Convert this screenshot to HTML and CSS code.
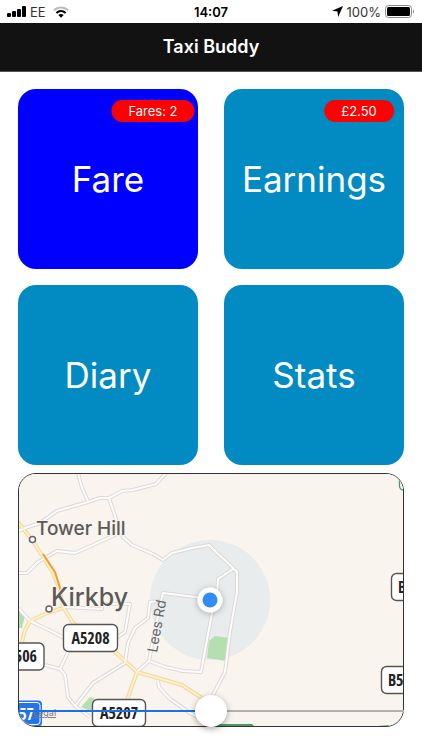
FILE: index.html
```
<!DOCTYPE html>
<html lang="en">

    <head>
        <meta charset="UTF-8">
        <meta name="viewport" content="width=device-width, initial-scale=1.0">
        <title>Taxi Buddy</title>
        <link rel="stylesheet" href="styles.css">
    </head>

    <body>

        <div class="status">
            <div class="status-left">
                <svg width="19" height="12" viewBox="0 0 19 12">
                    <rect x="0" y="7" width="4" height="4" rx="1"/>
                    <rect x="5" y="5" width="4" height="6" rx="1"/>
                    <rect x="10" y="3" width="4" height="8" rx="1"/>
                    <rect x="15" y="0" width="4" height="11" rx="1"/>
                </svg>
                <span>EE</span>
                <svg class="wifi" width="16" height="12" viewBox="0 0 16 12" fill="none" stroke="#000" stroke-width="2">
                    <path d="M1 4.4C5 .4 11 .4 15 4.4" stroke="#bbb"/>
                    <path d="M3.4 7C6 4.4 10 4.4 12.6 7"/>
                    <path d="M5.3 9C6.9 7.5 9.1 7.5 10.7 9L8 11.8z" fill="#000" stroke="none"/>
                </svg>
            </div>
            <div class="time">14:07</div>
            <div class="status-right">
                <svg width="11" height="11" viewBox="0 0 11 11">
                    <path d="M11 0L6.2 11L5.4 5.6L0 4.8z"/>
                </svg>
                <span>100%</span>
                <svg width="30" height="13" viewBox="0 0 30 13">
                    <rect x=".5" y=".5" width="26" height="12" rx="3" fill="none" stroke="#888"/>
                    <rect x="2" y="2" width="23" height="9" rx="1.5"/>
                    <path d="M28 4.5C29.4 5 29.4 8 28 8.5z" fill="#888"/>
                </svg>
            </div>
        </div>

        <header class="header">
            <h1>Taxi Buddy</h1>
        </header>

        <main class="main">
            <div class="tiles">
                <button type="button" class="tile active">Fare<span class="badge">Fares: 2</span></button>
                <button type="button" class="tile">Earnings<span class="badge">£2.50</span></button>
                <button type="button" class="tile">Diary</button>
                <button type="button" class="tile">Stats</button>
            </div>

            <div class="map-box">
                <div class="map">
                    <svg viewBox="19 474 384 252" preserveAspectRatio="xMidYMid slice">
                        <defs>
                            <filter id="shadow" x="-50%" y="-50%" width="200%" height="200%">
                                <feDropShadow dx="0" dy="1" stdDeviation="3" flood-opacity=".3"/>
                            </filter>
                            <g id="roads">
                                <path d="M78 473L82 488L88 501"/>
                                <path d="M18 531L25 528L40 523L57 511L88 502L100 498L109 498L122 491L133 490L156 484L167 472"/>
                                <path d="M109 498L117 522L123 537L132 545L153 554L163 560L172 553L192 548L209 545L218 554L227 562L237 572L237 592L230 632L225 672L213 695"/>
                                <path d="M233 569L218 579L217 598L212 613L201 672L183 671L165 667L149 661L137 672"/>
                                <path d="M18 573L27 573L38 562L57 551L75 553L93 545L117 534"/>
                                <path d="M203 598L163 593L161 601L150 602L148 618L135 628L128 643L125 663L93 683L75 706"/>
                                <path d="M149 661L152 645L161 601"/>
                                <path d="M18 608L30 621L53 632L68 640L68 652L60 669L65 675L68 697L75 706L90 717"/>
                                <path d="M60 669L45 665"/>
                                <path d="M63 607L102 609L102 604L130 604L125 632L110 642"/>
                                <path d="M158 681L159 687L170 699L190 713L200 718"/>
                            </g>
                            <g id="mainroads">
                                <path d="M18 522L32 540L43 557L53 573L60 590L63 607L73 623L113 650L137 672L182 685L208 702"/>
                                <path d="M22 642L25 630L30 621L47 613L63 608"/>
                                <path d="M137 672L127 700"/>
                            </g>
                        </defs>

                        <rect x="18" y="473" width="386" height="254" fill="#f9f4ed"/>
                        <circle cx="210" cy="600" r="60" fill="#e8ecec"/>

                        <g fill="#b5dfb1">
                            <path d="M18 611L25 615L22 628L18 628z"/>
                            <path d="M81 707L90 697L98 701L92 712z"/>
                            <path d="M215 636L229 638L226 661L207 658L209 641z"/>
                        </g>
                        <path d="M216 727V724H252L255 727zM366 727L390 725L388 727z" fill="#4f9968"/>

                        <g fill="none" stroke-linejoin="round">
                            <use href="#roads" stroke="#dbd9d8" stroke-width="4"/>
                            <use href="#mainroads" stroke="#f0d7a6" stroke-width="4"/>
                            <use href="#roads" stroke="#fefdfb" stroke-width="2"/>
                            <use href="#mainroads" stroke="#fff1c4" stroke-width="2"/>
                            <path d="M43 554L55 572L60 588L62 602" stroke="#f59c2c" stroke-width="2"/>
                        </g>

                        <g fill="#fff" stroke="#666" stroke-width="1.5">
                            <circle cx="32.5" cy="539.5" r="3"/>
                            <circle cx="49" cy="609" r="3"/>
                        </g>

                        <text class="place" x="36" y="535">Tower Hill</text>
                        <text class="place town" x="51" y="606">Kirkby</text>
                        <text class="street" transform="translate(157 653) rotate(-80)">Lees Rd</text>

                        <g fill="#fff" stroke="#555" stroke-width="1.4">
                            <rect x="63.5" y="624.5" width="54" height="27" rx="5"/>
                            <rect x="0" y="643" width="44" height="27" rx="5"/>
                            <rect x="92.5" y="699.5" width="53" height="27" rx="5"/>
                            <rect x="391.5" y="573.5" width="54" height="27" rx="5"/>
                            <rect x="381.5" y="666.5" width="54" height="27" rx="5"/>
                            <rect x="399.5" y="470" width="30" height="20" rx="4" stroke="#4f9968"/>
                        </g>
                        <rect x="0" y="700.5" width="42" height="26" rx="4" fill="#2475e9"/>
                        <rect x="0" y="702.5" width="40" height="22" rx="3" fill="none" stroke="#fff"/>

                        <g class="route">
                            <text x="90.5" y="644" text-anchor="middle">A5208</text>
                            <text x="37" y="662" text-anchor="end">506</text>
                            <text x="119" y="719" text-anchor="middle">A5207</text>
                            <text x="398" y="593">B</text>
                            <text x="388" y="686">B5</text>
                            <text class="route-blue" x="34" y="720" text-anchor="end">57</text>
                        </g>
                        <text class="legal" x="33" y="716">Legal</text>

                        <circle cx="210" cy="600" r="12.5" fill="#fff" filter="url(#shadow)"/>
                        <circle cx="210" cy="600" r="7.5" fill="#318df6"/>
                    </svg>
                </div>
                <input class="zoom" type="range" min="0" max="100" value="50" aria-label="Map zoom">
            </div>
        </main>

    </body>

</html>
```
FILE: styles.css
```
*{
    box-sizing: border-box;
}
body{
    margin: 0;
    background-color: white;
    color: black;
    font-family: Inter, "Liberation Sans", sans-serif;
}

.status{
    display: grid;
    grid-template-columns: 1fr auto 1fr;
    align-items: center;
    height: 23px;
    padding: 0 7px;
    font-size: 13px;
}
.status-left, .status-right{
    display: flex;
    align-items: center;
    gap: 4px;
}
.status-left span, .status-right span{
    color: #333;
}
.status-right{
    justify-content: flex-end;
}
.wifi{
    margin-left: 3px;
}
.time{
    font-weight: 600;
}

.header{
    padding: 12px;
    background-color: #121212;
    color: white;
    text-align: center;
    border-bottom: 1px solid #555;
}
.header h1{
    margin: 0;
    font-size: 18px;
    line-height: 24px;
    font-weight: 600;
}

.main{
    padding: 17px 18px;
}
.tiles{
    display: grid;
    grid-template-columns: 1fr 1fr;
    gap: 16px 26px;
}
.tile{
    position: relative;
    aspect-ratio: 1;
    padding: 0;
    border: none;
    border-radius: 18px;
    background-color: #028bc2;
    color: white;
    font-family: inherit;
    font-size: 35px;
    font-weight: 400;
}
.tile.active{
    background-color: #0000ff;
}
.badge{
    position: absolute;
    top: 11px;
    left: 75%;
    transform: translateX(-50%);
    padding: 0 17px;
    border-radius: 11px;
    background-color: #ff0000;
    font-size: 13px;
    font-weight: 400;
    line-height: 22px;
    white-space: nowrap;
}

.map-box{
    position: relative;
    margin-top: 8px;
}
.map{
    overflow: hidden;
    border: 1px solid #333;
    border-radius: 18px;
}
.map svg{
    display: block;
    width: 100%;
}
.place{
    fill: #5b5a58;
    stroke: #f9f4ed;
    stroke-width: 2px;
    paint-order: stroke;
    font-size: 19px;
    font-weight: 500;
}
.town{
    font-size: 25px;
}
.street{
    fill: #66686b;
    font-size: 14px;
}
.route{
    fill: #222;
    font-family: "Liberation Sans Narrow", "Open Sans Condensed", "DejaVu Sans Condensed", sans-serif;
    font-size: 16px;
    font-weight: 700;
}
.route-blue{
    fill: white;
}
.legal{
    fill: #777;
    font-size: 9px;
    text-decoration: underline;
}

/* slider lies over the bottom of the map */
.zoom{
    position: absolute;
    left: 0;
    bottom: 0;
    width: 100%;
    height: 32px;
    margin: 0;
    background: none;
    appearance: none;
    -webkit-appearance: none;
}
.zoom::-webkit-slider-runnable-track{
    height: 2px;
    background: linear-gradient(to right, #1b6fe8 50%, #b3b1b0 50%);
}
.zoom::-webkit-slider-thumb{
    -webkit-appearance: none;
    width: 32px;
    height: 32px;
    margin-top: -15px;
    border-radius: 50%;
    background: white;
    box-shadow: 0 2px 6px rgba(0,0,0,0.35);
}
```
